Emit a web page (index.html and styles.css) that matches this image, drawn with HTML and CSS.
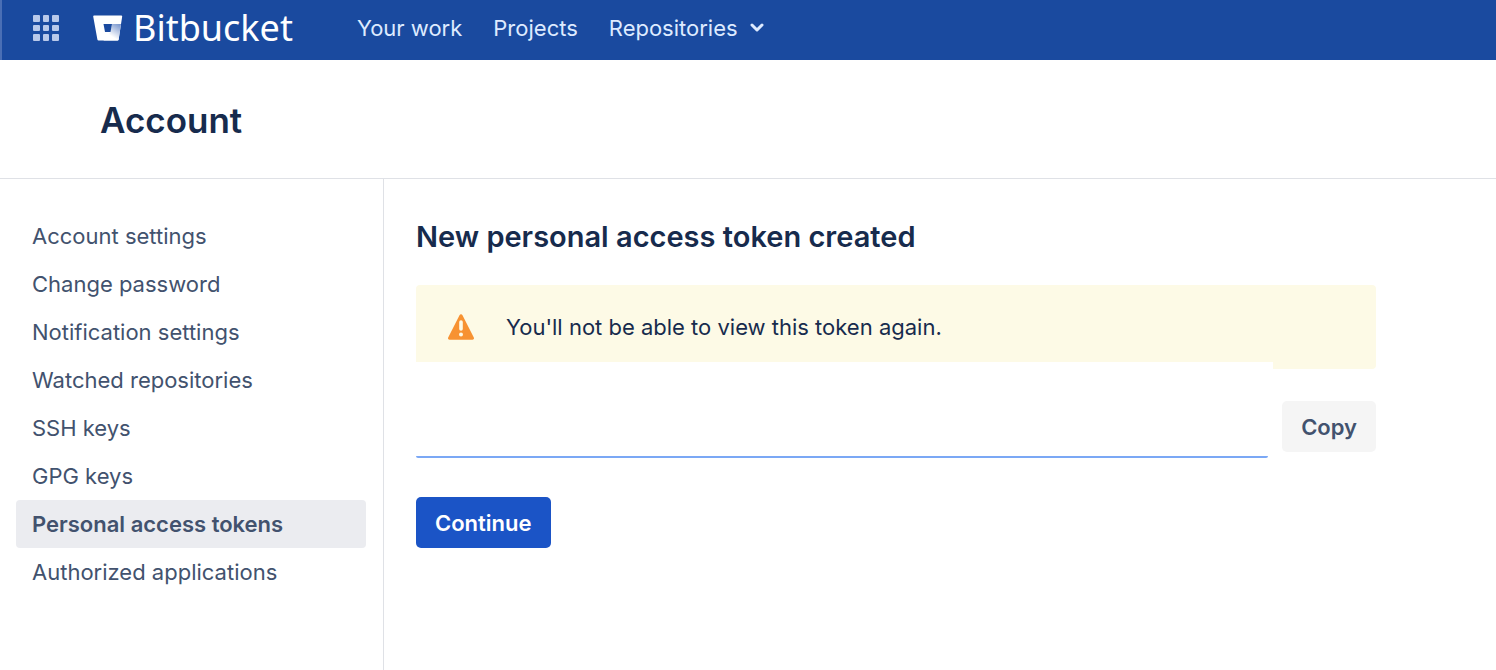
FILE: index.html
```html
<!DOCTYPE html>
<html lang="en">
<head>
    <meta charset="UTF-8">
    <meta name="viewport" content="width=device-width, initial-scale=1.0">
    <title>Personal access tokens - Bitbucket</title>
    <link rel="stylesheet" href="styles.css">
</head>
<body>
    <header class="header">
        <button type="button" class="app-switcher" aria-label="Application switcher">
            <svg width="26" height="26" viewBox="0 0 26 26" fill="#b9c9ea">
                <rect x="0" y="0" width="7" height="7" rx="1"/>
                <rect x="10" y="0" width="6" height="7" rx="1"/>
                <rect x="19" y="0" width="7" height="7" rx="1"/>
                <rect x="0" y="10" width="7" height="6" rx="1"/>
                <rect x="10" y="10" width="6" height="6" rx="1"/>
                <rect x="19" y="10" width="7" height="6" rx="1"/>
                <rect x="0" y="19" width="7" height="7" rx="1"/>
                <rect x="10" y="19" width="6" height="7" rx="1"/>
                <rect x="19" y="19" width="7" height="7" rx="1"/>
            </svg>
        </button>
        <a href="#" class="logo">
            <svg width="30" height="26" viewBox="0 0 30 26" aria-hidden="true">
                <defs>
                    <linearGradient id="logo-shade" x1="26" y1="8" x2="18" y2="21" gradientUnits="userSpaceOnUse">
                        <stop offset="0" stop-color="#7391cb"/>
                        <stop offset="1" stop-color="#fff"/>
                    </linearGradient>
                </defs>
                <path fill="#fff" d="M1.2 0.5h27a1 1 0 0 1 1 1.1L25.6 24.4a1.2 1.2 0 0 1-1.2 1H5.6a1.2 1.2 0 0 1-1.2-1L.2 1.6A1 1 0 0 1 1.2.5z"/>
                <path fill="url(#logo-shade)" d="M28 9h-9l-1.5 8-7 8.4h14a1.2 1.2 0 0 0 1.2-1z"/>
                <path fill="#1a4a9f" d="M10.5 9h8.5l-1.500 8h-5.500z"/>
            </svg>
            <span>Bitbucket</span>
        </a>
        <nav class="main-nav">
            <a href="#">Your work</a>
            <a href="#">Projects</a>
            <a href="#">Repositories
                <svg width="14" height="10" viewBox="0 0 14 10" fill="none" stroke="#deebff" stroke-width="3" stroke-linecap="round" stroke-linejoin="round" aria-hidden="true">
                    <path d="M2 2l5 5 5-5"/>
                </svg>
            </a>
        </nav>
    </header>

    <div class="page-header">
        <h1>Account</h1>
    </div>

    <div class="page-body">
        <nav class="sidebar">
            <ul>
                <li><a href="#">Account settings</a></li>
                <li><a href="#">Change password</a></li>
                <li><a href="#">Notification settings</a></li>
                <li><a href="#">Watched repositories</a></li>
                <li><a href="#">SSH keys</a></li>
                <li><a href="#">GPG keys</a></li>
                <li><a href="#" class="selected" aria-current="page">Personal access tokens</a></li>
                <li><a href="#">Authorized applications</a></li>
            </ul>
        </nav>
        <main class="content">
            <h2>New personal access token created</h2>
            <div class="message">
                <svg width="26" height="26" viewBox="0 0 26 26" aria-hidden="true">
                    <path fill="#f79232" d="M11.5 1.2a1.7 1.7 0 0 1 3 0L25.8 23.6a1.5 1.5 0 0 1-1.3 2.200h-23A1.5 1.5 0 0 1 .2 23.6z"/>
                    <path stroke="#fdfae6" stroke-width="3.6" stroke-linecap="round" d="M13 8v7"/>
                    <circle cx="13" cy="20.6" r="2" fill="#fdfae6"/>
                </svg>
                <p>You'll not be able to view this token again.</p>
            </div>
            <form>
                <div class="token-row">
                    <div class="token-field">
                        <input type="text" name="token" aria-label="Token" readonly>
                    </div>
                    <button type="button" class="button">Copy</button>
                </div>
                <button type="submit" class="button primary">Continue</button>
            </form>
        </main>
    </div>
</body>
</html>
```
FILE: styles.css
```css
* {
    box-sizing: border-box;
}

body {
    margin: 0;
    min-height: 100vh;
    display: flex;
    flex-direction: column;
    background: #fff;
    color: #172b4d;
    font-family: Inter, sans-serif;
    font-size: 22px;
    line-height: 32px;
}

a {
    text-decoration: none;
}

svg {
    display: block;
    flex: none;
}

.header {
    display: flex;
    align-items: center;
    height: 60px;
    padding: 0 32px 4px 31px;
    background: #1a4a9f;
    border-left: 2px solid #4a6fb5;
}

.app-switcher {
    padding: 0;
    border: none;
    background: none;
    cursor: pointer;
}

.logo {
    display: flex;
    align-items: center;
    gap: 10px;
    margin-left: 34px;
    color: #fff;
    font-family: "Noto Sans", sans-serif;
    font-size: 36px;
}

.main-nav {
    display: flex;
    gap: 31px;
    margin-left: 64px;
}

.main-nav a {
    display: flex;
    align-items: center;
    gap: 12px;
    color: #deebff;
}

.page-header {
    padding: 36px 100px 34px;
    border-bottom: 1px solid #dfe1e6;
}

h1, h2, p {
    margin: 0;
}

h1 {
    font-size: 35px;
    line-height: 48px;
    font-weight: 600;
}

.page-body {
    display: flex;
    flex: 1;
}

.sidebar {
    width: 384px;
    padding: 33px 17px 33px 16px;
    border-right: 1px solid #dfe1e6;
}

.sidebar ul {
    list-style: none;
    margin: 0;
    padding: 0;
}

.sidebar a {
    display: block;
    padding: 8px 16px;
    border-radius: 4px;
    color: #42526e;
}

.sidebar .selected {
    background: #ebecf0;
    font-weight: 600;
}

.content {
    flex: 1;
    padding: 38px 120px 38px 32px;
}

h2 {
    font-size: 29px;
    line-height: 40px;
    font-weight: 600;
}

.message {
    display: flex;
    align-items: center;
    gap: 32px;
    height: 84px;
    margin-top: 28px;
    padding: 0 32px;
    background: #fdfae6;
    border-radius: 4px;
}

/* the token field runs up over the bottom of the message */
.token-row {
    display: flex;
    align-items: flex-end;
    gap: 9px;
    margin-top: -7px;
}

.token-field {
    flex: 1;
    padding-right: 5px;
    background: #fff;
}

.token-field input {
    display: block;
    width: 100%;
    height: 96px;
    padding: 32px 12px 0;
    border: none;
    border-bottom: 2px solid #7ba8f5;
    border-radius: 2px;
    background: #fff;
    color: #172b4d;
    font: inherit;
    outline: none;
}

.button {
    height: 51px;
    padding: 0 19px;
    border: none;
    border-radius: 5px;
    background: #f5f5f5;
    color: #42526e;
    font: inherit;
    font-weight: 600;
    cursor: pointer;
}

.token-row .button {
    margin-bottom: 6px;
}

.primary {
    margin-top: 39px;
    background: #1b54c6;
    color: #fff;
}
```
